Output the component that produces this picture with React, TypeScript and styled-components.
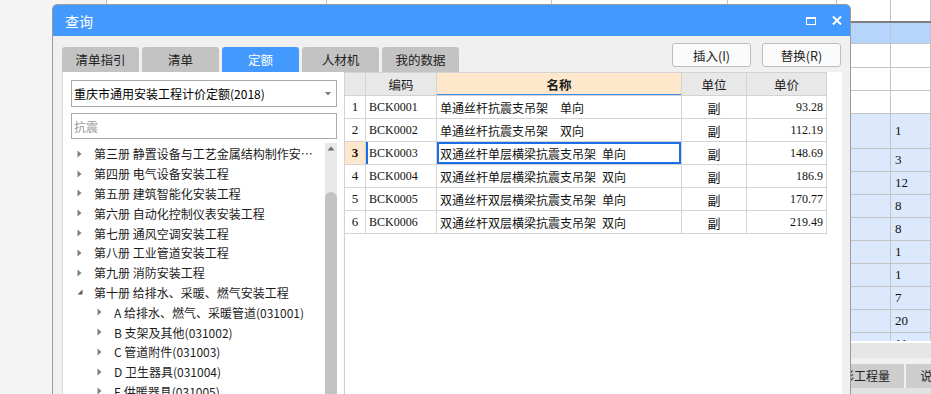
import React from "react";
import styled, { createGlobalStyle } from "styled-components";

const GlobalStyle = createGlobalStyle`
  html, body { margin: 0; padding: 0; }
  body {
    font-family: "Noto Sans CJK SC", "Noto Sans", sans-serif;
    background: #f4f4f4;
  }
  * { box-sizing: border-box; }
`;

const SHEET_COLS = "220px 225px 176px 109px 54px 1fr";

const bottomTabs = ["工料机显示", "单价构成", "标准换算", "换算信息", "安装费用", "特征及内容", "工程量明细", "反查图形工程量", "说明信息", "组价方案"];
const sheetRows = [
  { h: 23, v: "", blue: false },
  { h: 22, v: "", blue: false },
  { h: 22, v: "", blue: false },
  { h: 34, v: "1", blue: true },
  { h: 22, v: "3", blue: true },
  { h: 22, v: "12", blue: true },
  { h: 22, v: "8", blue: true },
  { h: 22, v: "8", blue: true },
  { h: 22, v: "1", blue: true },
  { h: 22, v: "1", blue: true },
  { h: 22, v: "7", blue: true },
  { h: 22, v: "20", blue: true },
  { h: 22, v: "11", blue: true },
];

const tabs = ["清单指引", "清单", "定额", "人材机", "我的数据"];

const tree = [
  { label: "第三册 静置设备与工艺金属结构制作安装工程", depth: 0, open: false },
  { label: "第四册 电气设备安装工程", depth: 0, open: false },
  { label: "第五册 建筑智能化安装工程", depth: 0, open: false },
  { label: "第六册 自动化控制仪表安装工程", depth: 0, open: false },
  { label: "第七册 通风空调安装工程", depth: 0, open: false },
  { label: "第八册 工业管道安装工程", depth: 0, open: false },
  { label: "第九册 消防安装工程", depth: 0, open: false },
  { label: "第十册 给排水、采暖、燃气安装工程", depth: 0, open: true },
  { label: "A 给排水、燃气、采暖管道(031001)", depth: 1, open: false },
  { label: "B 支架及其他(031002)", depth: 1, open: false },
  { label: "C 管道附件(031003)", depth: 1, open: false },
  { label: "D 卫生器具(031004)", depth: 1, open: false },
  { label: "E 供暖器具(031005)", depth: 1, open: false },
];

const rows = [
  { code: "BCK0001", name: "单通丝杆抗震支吊架\u3000单向", unit: "副", price: "93.28" },
  { code: "BCK0002", name: "单通丝杆抗震支吊架\u3000双向", unit: "副", price: "112.19" },
  { code: "BCK0003", name: "双通丝杆单层横梁抗震支吊架\u2002单向", unit: "副", price: "148.69" },
  { code: "BCK0004", name: "双通丝杆单层横梁抗震支吊架\u2002双向", unit: "副", price: "186.9" },
  { code: "BCK0005", name: "双通丝杆双层横梁抗震支吊架\u2002单向", unit: "副", price: "170.77" },
  { code: "BCK0006", name: "双通丝杆双层横梁抗震支吊架\u2002双向", unit: "副", price: "219.49" },
];

const App = () => {
  return (
    <>
      <GlobalStyle />
      <Screen>
        <Gutter />
        <Sheet>
          <SheetRow $h={21} $bg="#ffffff" $line="2px solid #7f7f7f">
            <SheetCell /><SheetCell /><SheetCell /><SheetCell /><SheetCell /><SheetCell />
          </SheetRow>
          <SheetRow $h={20} $bg="#b5d5fd" $line="1px solid #c4c4c4">
            <SheetCell /><SheetCell /><SheetCell /><SheetCell /><SheetCell /><SheetCell />
          </SheetRow>
          <RowsViewport>
            {sheetRows.map((r, i) => (
              <SheetRow key={i} $h={r.h} $bg={r.blue ? "#dce8fc" : "#ffffff"} $line="1px solid #c4c4c4">
                <SheetCell /><SheetCell /><SheetCell /><SheetCell /><SheetCell />
                <SheetCell>{r.v}</SheetCell>
              </SheetRow>
            ))}
          </RowsViewport>
          <HScroll />
          <BottomTabBar>
            {bottomTabs.map((t) => (
              <BottomTab key={t}>{t}</BottomTab>
            ))}
          </BottomTabBar>
          <BottomFill />
        </Sheet>

        <Dialog>
          <TitleBar>
            <Title>查询</Title>
            <TitleIcons>
              <svg width="10" height="8" viewBox="0 0 10 8">
                <rect x="0.5" y="0.5" width="9" height="7" fill="none" stroke="#fff" />
                <rect x="0" y="0" width="10" height="2" fill="#fff" />
              </svg>
              <svg width="10" height="9" viewBox="0 0 10 9">
                <path d="M1 0.5 L9 8.5 M9 0.5 L1 8.5" stroke="#fff" strokeWidth="2" />
              </svg>
            </TitleIcons>
          </TitleBar>
          <Body>
            <Toolbar>
              <Tabs>
                {tabs.map((t) => (
                  <Tab key={t} $active={t === "定额"}>{t}</Tab>
                ))}
              </Tabs>
              <Buttons>
                <ActionButton>插入(I)</ActionButton>
                <ActionButton>替换(R)</ActionButton>
              </Buttons>
            </Toolbar>
            <Panes>
              <LeftPane>
                <SelectBox>
                  <span>重庆市通用安装工程计价定额(2018)</span>
                  <svg width="6" height="4" viewBox="0 0 6 4">
                    <path d="M0 0 H6 L3 3.5Z" fill="#7a7a7a" />
                  </svg>
                </SelectBox>
                <SearchBox>抗震</SearchBox>
                <TreeArea>
                  <TreeList>
                    {tree.map((n) => (
                      <TreeRow key={n.label} $depth={n.depth}>
                        <Caret>
                          {n.open ? (
                            <svg width="6" height="6" viewBox="0 0 6 6">
                              <path d="M5.5 0.5 V5.5 H0.5Z" fill="#5a5a5a" />
                            </svg>
                          ) : (
                            <svg width="5" height="8" viewBox="0 0 5 8">
                              <path d="M0.5 0.5 L4.5 4 L0.5 7.5Z" fill="#7d7d7d" />
                            </svg>
                          )}
                        </Caret>
                        <TreeLabel>{n.label}</TreeLabel>
                      </TreeRow>
                    ))}
                  </TreeList>
                  <ScrollTrack>
                    <svg width="8" height="5" viewBox="0 0 8 5">
                      <path d="M0.5 4.5 L4 0.5 L7.5 4.5Z" fill="#6e6e6e" />
                    </svg>
                    <ScrollThumb />
                  </ScrollTrack>
                </TreeArea>
              </LeftPane>
              <RightPane>
                <Grid>
                  <colgroup>
                    <col style={{ width: 21 }} />
                    <col style={{ width: 71 }} />
                    <col style={{ width: 245 }} />
                    <col style={{ width: 65 }} />
                    <col style={{ width: 80 }} />
                  </colgroup>
                  <thead>
                    <tr>
                      <HeadCell />
                      <HeadCell>编码</HeadCell>
                      <HeadCell $focus>名称</HeadCell>
                      <HeadCell>单位</HeadCell>
                      <HeadCell>单价</HeadCell>
                    </tr>
                  </thead>
                  <tbody>
                    {rows.map((r, i) => {
                      const sel = i === 2;
                      return (
                        <tr key={r.code}>
                          <NumCell $selected={sel}>{i + 1}</NumCell>
                          <CodeCell $selected={sel}>{r.code}</CodeCell>
                          <NameCell $selected={sel}>{r.name}</NameCell>
                          <UnitCell>{r.unit}</UnitCell>
                          <PriceCell>{r.price}</PriceCell>
                        </tr>
                      );
                    })}
                  </tbody>
                </Grid>
              </RightPane>
            </Panes>
          </Body>
        </Dialog>
      </Screen>
    </>
  );
};

const Screen = styled.div`
  position: relative;
  width: 931px;
  height: 394px;
  overflow: hidden;
  background: #f4f4f4;
  display: flex;
`;

const Gutter = styled.div`
  width: 106px;
  flex: none;
`;

const Sheet = styled.div`
  flex: 1;
  display: flex;
  flex-direction: column;
  background: #ffffff;
  border-left: 1px solid #c4c4c4;
  min-width: 0;
`;

const SheetRow = styled.div<{ $h: number; $bg: string; $line: string }>`
  flex: none;
  display: grid;
  grid-template-columns: ${SHEET_COLS};
  height: ${(p) => p.$h}px;
  background: ${(p) => p.$bg};
  border-bottom: ${(p) => p.$line};
  box-sizing: content-box;
`;

const SheetCell = styled.div`
  border-right: 1px solid #c4c4c4;
  display: flex;
  align-items: center;
  padding-left: 4px;
  font-family: "Liberation Serif", serif;
  font-size: 13px;
  color: #111;
`;

const RowsViewport = styled.div`
  flex: none;
  height: 297px;
  overflow: hidden;
`;

const HScroll = styled.div`
  flex: none;
  height: 17px;
  background: #e6e6e6;
  border-top: 2px solid #ffffff;
`;

const BottomTabBar = styled.div`
  flex: none;
  display: flex;
  gap: 2px;
  background: #f0f0f0;
  padding: 6px 0 0 103px;
`;

const BottomTab = styled.div`
  flex: none;
  height: 24px;
  line-height: 24px;
  padding: 0 14px;
  background: #cdcdcd;
  color: #222;
  font-size: 12px;
  white-space: nowrap;
`;

const BottomFill = styled.div`
  flex: 1;
  background: #e2e2e2;
`;

const Dialog = styled.section`
  position: absolute;
  left: 52px;
  top: 4px;
  width: 799px;
  height: 400px;
  border: 1px solid #9a9a9a;
  border-radius: 5px 5px 0 0;
  background: #f0f0f0;
  display: flex;
  flex-direction: column;
  overflow: hidden;
`;

const TitleBar = styled.div`
  flex: none;
  height: 31px;
  background: #4499ff;
  display: flex;
  align-items: center;
  justify-content: space-between;
  padding: 0 8px 0 12px;
`;

const Title = styled.div`
  color: #ffffff;
  font-size: 14px;
  line-height: 1;
`;

const TitleIcons = styled.div`
  display: flex;
  align-items: center;
  gap: 16px;
  svg { display: block; }
`;

const Body = styled.div`
  flex: 1;
  display: flex;
  flex-direction: column;
  padding: 0 8px 0 9px;
  min-height: 0;
`;

const Toolbar = styled.div`
  flex: none;
  height: 36px;
  display: flex;
  justify-content: space-between;
`;

const Tabs = styled.div`
  align-self: flex-end;
  display: flex;
  gap: 3px;
`;

const Tab = styled.div<{ $active?: boolean }>`
  width: 77px;
  height: 25px;
  border-radius: 3px 3px 0 0;
  background: ${(p) => (p.$active ? "#4499ff" : "#c3c3c3")};
  color: ${(p) => (p.$active ? "#ffffff" : "#222222")};
  font-size: 12.5px;
  display: flex;
  align-items: center;
  justify-content: center;
`;

const Buttons = styled.div`
  display: flex;
  gap: 11px;
  margin: 7px 1px 0 0;
  align-self: flex-start;
`;

const ActionButton = styled.button`
  width: 79px;
  height: 24px;
  padding: 0;
  background: #fbfbfb;
  border: 1px solid #bdbdbd;
  border-radius: 3px;
  font-family: "Noto Sans CJK SC", sans-serif;
  font-size: 12.5px;
  color: #222;
`;

const Panes = styled.div`
  flex: 1;
  display: flex;
  min-height: 0;
`;

const LeftPane = styled.div`
  width: 282px;
  flex: none;
  background: #ffffff;
  border-left: 1px solid #dadada;
  padding: 8px 7px 0 8px;
  display: flex;
  flex-direction: column;
`;

const SelectBox = styled.div`
  height: 27px;
  flex: none;
  border: 1px solid #a9a9a9;
  display: flex;
  align-items: center;
  justify-content: space-between;
  padding: 0 5px 0 2px;
  font-size: 12px;
  color: #000;
  svg { display: block; }
`;

const SearchBox = styled.div`
  height: 26px;
  flex: none;
  margin-top: 6px;
  border: 1px solid #a9a9a9;
  display: flex;
  align-items: center;
  padding-left: 2px;
  font-size: 12px;
  color: #9a9a9a;
`;

const TreeArea = styled.div`
  flex: 1;
  display: flex;
  margin-top: 4px;
  min-height: 0;
`;

const TreeList = styled.div`
  flex: 1;
  min-width: 0;
  padding: 1px 6px 0 0;
  overflow: hidden;
`;

const TreeRow = styled.div<{ $depth: number }>`
  height: 19.8px;
  display: flex;
  align-items: center;
  padding-left: ${(p) => 6 + p.$depth * 20}px;
  font-size: 12px;
  color: #1c1c1c;
  white-space: nowrap;
`;

const Caret = styled.span`
  width: 17px;
  flex: none;
  display: flex;
  align-items: center;
  svg { display: block; }
`;

const TreeLabel = styled.span`
  flex: 1;
  min-width: 0;
  overflow: hidden;
  text-overflow: ellipsis;
`;

const ScrollTrack = styled.div`
  width: 12px;
  flex: none;
  background: #e8e8e8;
  display: flex;
  flex-direction: column;
  align-items: center;
  padding-top: 3px;
  svg { display: block; }
`;

const ScrollThumb = styled.div`
  margin-top: 41px;
  width: 12px;
  flex: 1;
  background: #c2c2c2;
  border-radius: 6px 6px 0 0;
`;

const RightPane = styled.div`
  flex: 1;
  background: #ffffff;
  border-left: 1px solid #d0d0d0;
`;

const Grid = styled.table`
  border-collapse: collapse;
  table-layout: fixed;
  width: 482px;
  margin-left: -1px;
  font-size: 12px;
  color: #111;
`;

const HeadCell = styled.th<{ $focus?: boolean }>`
  height: 23px;
  padding: 0;
  border: 1px solid #d3d3d3;
  background: ${(p) => (p.$focus ? "#fee7cb" : "#e8e8e8")};
  font-weight: ${(p) => (p.$focus ? 700 : 400)};
  font-size: 12.5px;
  color: #1c1c1c;
  box-shadow: ${(p) => (p.$focus ? "inset 0 -1px 0 #3b8cf0" : "none")};
`;

const BodyCell = styled.td`
  height: 23px;
  padding: 0;
  border: 1px solid #d3d3d3;
  white-space: nowrap;
  overflow: hidden;
`;

const NumCell = styled(BodyCell)<{ $selected?: boolean }>`
  text-align: center;
  font-family: "Liberation Serif", serif;
  font-size: 13px;
  font-weight: ${(p) => (p.$selected ? 700 : 400)};
  background: ${(p) => (p.$selected ? "#fee7cb" : "#ffffff")};
`;

const CodeCell = styled(BodyCell)<{ $selected?: boolean }>`
  padding-left: 3px;
  font-family: "Liberation Serif", serif;
  font-size: 12px;
  box-shadow: ${(p) => (p.$selected ? "inset 2px 0 0 #1a6fe6" : "none")};
`;

const NameCell = styled(BodyCell)<{ $selected?: boolean }>`
  padding-left: 3px;
  font-size: 12px;
  box-shadow: ${(p) => (p.$selected ? "inset 0 0 0 2px #1a6fe6" : "none")};
`;

const UnitCell = styled(BodyCell)`
  text-align: center;
  font-size: 13px;
`;

const PriceCell = styled(BodyCell)`
  text-align: right;
  padding-right: 3px;
  font-family: "Liberation Serif", serif;
  font-size: 12px;
`;

export default App;
